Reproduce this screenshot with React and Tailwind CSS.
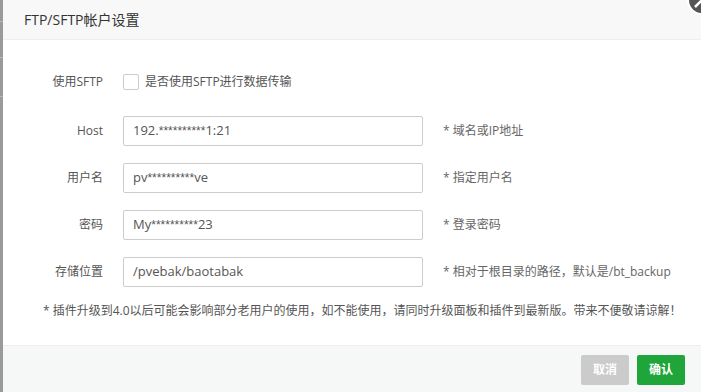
const mask = value => {
  // render the run of asterisks in a narrower face, like the reference
  const parts = value.split(/(\*+)/)
  return parts.map((p, i) =>
    p.startsWith('*') ? (
      <span key={i} className="text-[12px]" style={{ fontFamily: '"Liberation Sans", sans-serif' }}>{p}</span>
    ) : (
      <span key={i}>{p}</span>
    )
  )
}

export default function App() {
  const rows = [
    { label: 'Host', value: '192.**********1:21', hint: '* 域名或IP地址' },
    { label: '用户名', value: 'pv**********ve', hint: '* 指定用户名' },
    { label: '密码', value: 'My**********23', hint: '* 登录密码' },
    { label: '存储位置', value: '/pvebak/baotabak', hint: '* 相对于根目录的路径，默认是/bt_backup' },
  ]

  return (
    <div
      className="relative flex w-[701px] h-[392px] overflow-hidden bg-white text-[12px] text-[#555]"
      style={{ fontFamily: '"Open Sans", "Noto Sans CJK SC", sans-serif' }}
    >
      {/* backdrop strip at the left edge */}
      <div className="w-[3px] h-full bg-[#9a9a9a] flex flex-col">
        <div className="h-[21px]" />
        <div className="h-px bg-[#b8b8b8]" />
        <div className="h-[35px]" />
        <div className="h-px bg-[#b8b8b8]" />
        <div className="h-[38px]" />
        <div className="h-px bg-[#b8b8b8]" />
      </div>

      <div className="flex-1 flex flex-col">
        {/* header */}
        <div className="h-[40px] shrink-0 bg-[#f8f8f8] border-b border-[#eee] flex items-center pl-[21px] text-[14px] text-[#333]">
          FTP/SFTP帐户设置
        </div>

        {/* body */}
        <div className="flex-1 pt-[27px]">
          <div className="flex items-center h-[30px]">
            <div className="w-[100px] text-right">使用SFTP</div>
            <div className="ml-[20px] flex items-center">
              <span className="w-[16px] h-[16px] border border-[#ccc] rounded-[2px] bg-white" />
              <span className="ml-[6px] text-[#555]">是否使用SFTP进行数据传输</span>
            </div>
          </div>

          <div className="mt-[19px] flex flex-col gap-[17px]">
            {rows.map(r => (
              <div key={r.label} className="flex items-center h-[30px]">
                <div className="w-[100px] text-right">{r.label}</div>
                <div className="ml-[20px] w-[300px] h-[30px] border border-[#ccc] rounded-[2px] flex items-center px-[9px] text-[13px] text-[#555]">
                  {mask(r.value)}
                </div>
                <div className="ml-[20px] text-[#666]">{r.hint}</div>
              </div>
            ))}
          </div>

          <div className="mt-[15px] pl-[40px] text-[#555] leading-[18px]">
            * 插件升级到4.0以后可能会影响部分老用户的使用，如不能使用，请同时升级面板和插件到最新版。带来不便敬请谅解！
          </div>
        </div>

        {/* footer */}
        <div className="h-[47px] shrink-0 bg-[#f6f8f8] border-t border-[#eee] flex items-center justify-end gap-[8px] pr-[16px] pt-[2px]">
          <button className="w-[48px] h-[30px] rounded-[2px] bg-[#cbcbcb] text-white font-bold text-[12px]">取消</button>
          <button className="w-[48px] h-[30px] rounded-[2px] bg-[#20a53a] text-white font-bold text-[12px]">确认</button>
        </div>
      </div>

      {/* close button, mostly off-canvas */}
      <svg className="absolute left-[686px] top-[-16px]" width="32" height="32" viewBox="0 0 32 32">
        <circle cx="16" cy="16" r="15" fill="#fff" />
        <circle cx="16" cy="16" r="13" fill="#555" />
        <path d="M9 23 L23 9 M9 9 L23 23" stroke="#fff" strokeWidth="2.5" />
      </svg>
    </div>
  )
}
